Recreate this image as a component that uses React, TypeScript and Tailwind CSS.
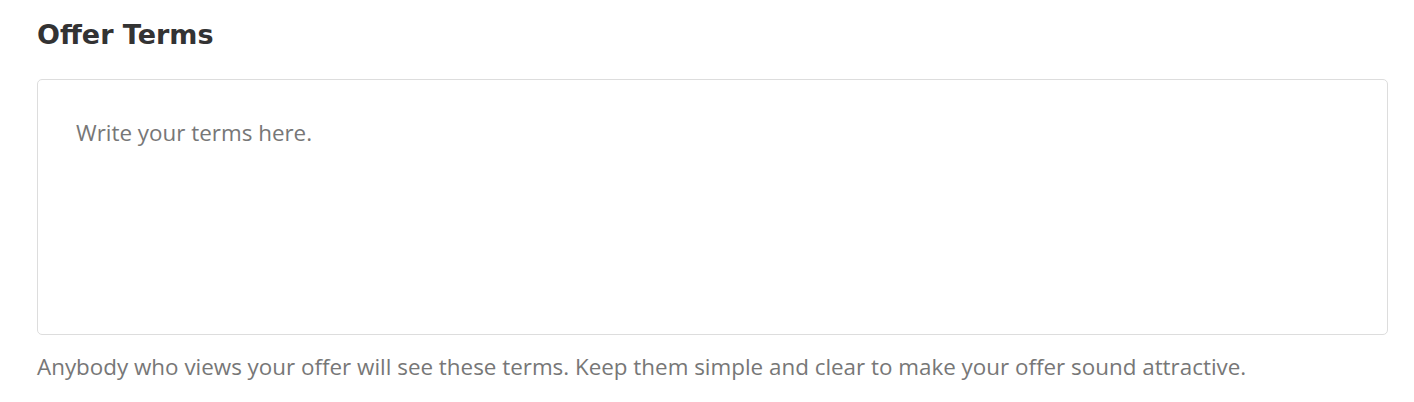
export default function App() {
  return (
    <div className="min-h-[402px] w-[1414px] bg-white px-[37px] pt-[17px]">
      <h2 className="font-['DejaVu_Sans',sans-serif] text-[27px] leading-[36px] font-bold text-[#333333]">
        Offer Terms
      </h2>

      <div className="mt-[26px] h-[256px] w-[1351px] rounded-[5px] border border-[#dddddd] px-[38px] pt-[37px]">
        <p className="font-['Open_Sans',sans-serif] text-[22.4px] leading-[32px] text-[#777777]">
          Write your terms here.
        </p>
      </div>

      <p className="mt-[16px] font-['Open_Sans',sans-serif] text-[22.4px] leading-[32px] text-[#777777]">
        Anybody who views your offer will see these terms. Keep them simple and clear to make your offer sound attractive.
      </p>
    </div>
  );
}
